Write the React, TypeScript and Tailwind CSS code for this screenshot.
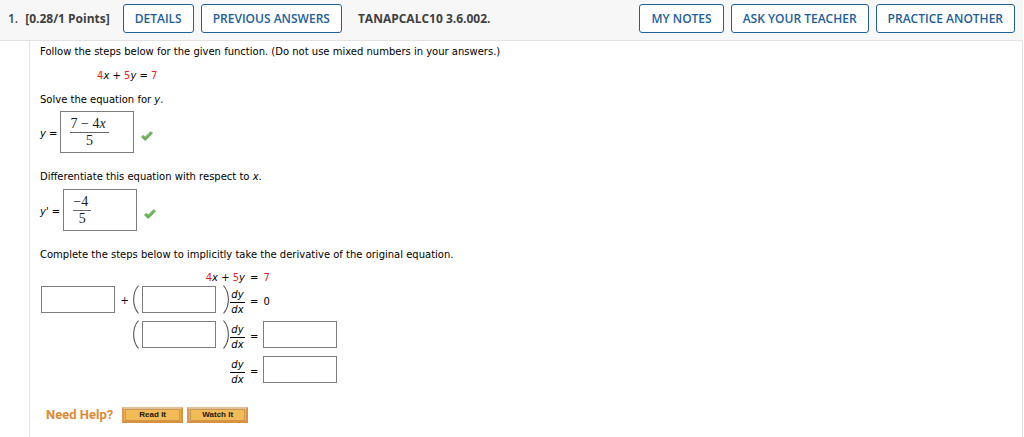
import type { ReactNode } from "react";

const headerButton =
  "h-[29px] rounded-[3px] border border-[#22609b] bg-white px-[11px] pt-px text-[12px] leading-4 font-semibold text-[#22609b] whitespace-nowrap hover:bg-[#eef5fb]";

function HeaderButton({ children }: { children: ReactNode }) {
  return (
    <button type="button" className={headerButton}>
      {children}
    </button>
  );
}

function Equation() {
  return (
    <>
      <span className="text-[#e8251c]">4</span>
      <i>x</i> + <span className="text-[#e8251c]">5</span>
      <i>y</i>
    </>
  );
}

function Check() {
  return (
    <svg role="img" aria-label="Correct" viewBox="0 0 12 10" className="mt-2 ml-[7px] h-[10px] w-3">
      <path
        d="M0.6 5.6 L2.2 4.2 L4.2 5.6 L9.6 0.6 L11.4 1.7 L11.2 3 L4.8 9.3 L3.7 9.3 L0.7 6.5 Z"
        fill="#63a94f"
        stroke="#9cc48f"
        strokeWidth="0.7"
      />
      <path d="M1.5 5.6 L2.4 5 L4.3 6.8 L9.8 1.8" fill="none" stroke="#8fc97b" strokeWidth="0.9" />
    </svg>
  );
}

function MathAnswer({ label, top, bottom }: { label: string; top: ReactNode; bottom: string }) {
  return (
    <div
      role="textbox"
      aria-label={label}
      tabIndex={0}
      className="h-[42px] w-[74px] border border-[#7d7d7d] bg-white px-[9px] pt-1 font-['Liberation_Serif',serif] text-[14px] leading-4 text-[#1c1c1c]"
    >
      <span className="inline-flex flex-col text-center">
        <span className="border-b border-[#666] pr-[3px] whitespace-nowrap">{top}</span>
        <span>{bottom}</span>
      </span>
    </div>
  );
}

function Blank({ label }: { label: string }) {
  return (
    <input
      type="text"
      aria-label={label}
      className="h-[27px] w-[74px] rounded-none border border-[#7d7d7d] bg-white px-1"
    />
  );
}

function Paren({ side }: { side: "left" | "right" }) {
  return (
    <svg aria-hidden="true" viewBox="0 0 7 29" className="h-[29px] w-[7px]">
      <path
        d={side === "left" ? "M6.5 0.5 C0 8 0 21 6.5 28.5" : "M0.5 0.5 C7 8 7 21 0.5 28.5"}
        fill="none"
        stroke="#555"
        strokeWidth="1.1"
      />
    </svg>
  );
}

function DyDx() {
  return (
    <span className="flex w-[15px] flex-col pt-[6px] text-center leading-[14px] italic">
      <span className="border-b border-black">dy</span>
      <span>dx</span>
    </span>
  );
}

function Factor({ label }: { label: string }) {
  return (
    <>
      <Paren side="left" />
      <span className="mr-[7px] ml-[3px] flex">
        <Blank label={label} />
      </span>
      <Paren side="right" />
      <DyDx />
    </>
  );
}

function HelpButton({ children }: { children: ReactNode }) {
  return (
    <button
      type="button"
      className="flex h-4 w-[61px] border-2 border-t-[#e3c097] border-r-[#d8913f] border-b-[#dc8f3c] border-l-[#d79a5c] bg-[#efb34e] font-['Liberation_Sans',sans-serif] text-[8px] font-bold text-[#20160a]"
    >
      <span className="mx-px flex h-full flex-1 items-center justify-center border border-[#c99750] bg-[#f1bc58]">
        {children}
      </span>
    </button>
  );
}

export default function App() {
  return (
    <div className="min-h-screen bg-white pr-px font-['DejaVu_Sans',sans-serif] text-[10px] leading-3 text-black">
      <header className="flex h-[41px] items-center border-b border-[#e2e2e2] bg-[#f7f7f7] pr-2 pb-[3px] pl-2 font-['Open_Sans',sans-serif] text-[12px] leading-4 font-bold text-[#3f3f3f]">
        <span className="mr-[7px] font-semibold">1.</span>
        <span>[0.28/1 Points]</span>
        <div className="ml-[13px] flex gap-[7px]">
          <HeaderButton>DETAILS</HeaderButton>
          <HeaderButton>PREVIOUS ANSWERS</HeaderButton>
        </div>
        <h1 className="ml-4">TANAPCALC10 3.6.002.</h1>
        <div className="ml-auto flex gap-[7px]">
          <HeaderButton>MY NOTES</HeaderButton>
          <HeaderButton>ASK YOUR TEACHER</HeaderButton>
          <HeaderButton>PRACTICE ANOTHER</HeaderButton>
        </div>
      </header>

      <main className="ml-[29px] min-h-[calc(100vh-41px)] border-x border-[#e2e2e2] pt-[5px] pl-[10px]">
        <p>Follow the steps below for the given function. (Do not use mixed numbers in your answers.)</p>
        <p className="mt-3 ml-[57px]">
          <Equation /> = <span className="text-[#e8251c]">7</span>
        </p>

        <p className="mt-3">
          Solve the equation for <i>y</i>.
        </p>
        <div className="mt-[5px] flex items-center">
          <span className="mr-[3px] pt-1">
            <i>y</i> =
          </span>
          <MathAnswer
            label="y equals"
            top={
              <>
                7 − 4<i>x</i>
              </>
            }
            bottom="5"
          />
          <Check />
        </div>

        <p className="mt-[18px]">
          Differentiate this equation with respect to <i>x</i>.
        </p>
        <div className="mt-[6px] flex items-center">
          <span className="mr-[3px] pt-1">
            <i>y</i>' =
          </span>
          <MathAnswer label="y prime equals" top="−4" bottom="5" />
          <Check />
        </div>

        <p className="mt-[18px]">
          Complete the steps below to implicitly take the derivative of the original equation.
        </p>
        <div className="mt-[11px] ml-px grid w-max grid-cols-[204px_auto_auto] items-center gap-x-[5px]">
          <div className="-mb-[2px] justify-self-end">
            <Equation />
          </div>
          <span className="-mb-[2px]">=</span>
          <span className="-mb-[2px] text-[#e8251c]">7</span>

          <div className="flex items-center justify-self-end">
            <Blank label="First term" />
            <span className="ml-[6px] pt-[2px] pr-[3px]">+</span>
            <Factor label="Coefficient of dy/dx" />
          </div>
          <span className="pt-1">=</span>
          <span className="pt-1">0</span>

          <div className="flex items-center justify-self-end">
            <Factor label="Coefficient of dy/dx, isolated" />
          </div>
          <span className="pt-1">=</span>
          <Blank label="Right-hand side" />

          <div className="justify-self-end">
            <DyDx />
          </div>
          <span className="pt-1">=</span>
          <Blank label="dy/dx" />
        </div>

        <div className="mt-5 ml-[6px] flex items-center">
          <span className="mr-[9px] font-['Roboto',sans-serif] text-[13px] leading-4 font-bold text-[#e08a35]">
            Need Help?
          </span>
          <div className="flex gap-1">
            <HelpButton>Read It</HelpButton>
            <HelpButton>Watch It</HelpButton>
          </div>
        </div>
      </main>
    </div>
  );
}
